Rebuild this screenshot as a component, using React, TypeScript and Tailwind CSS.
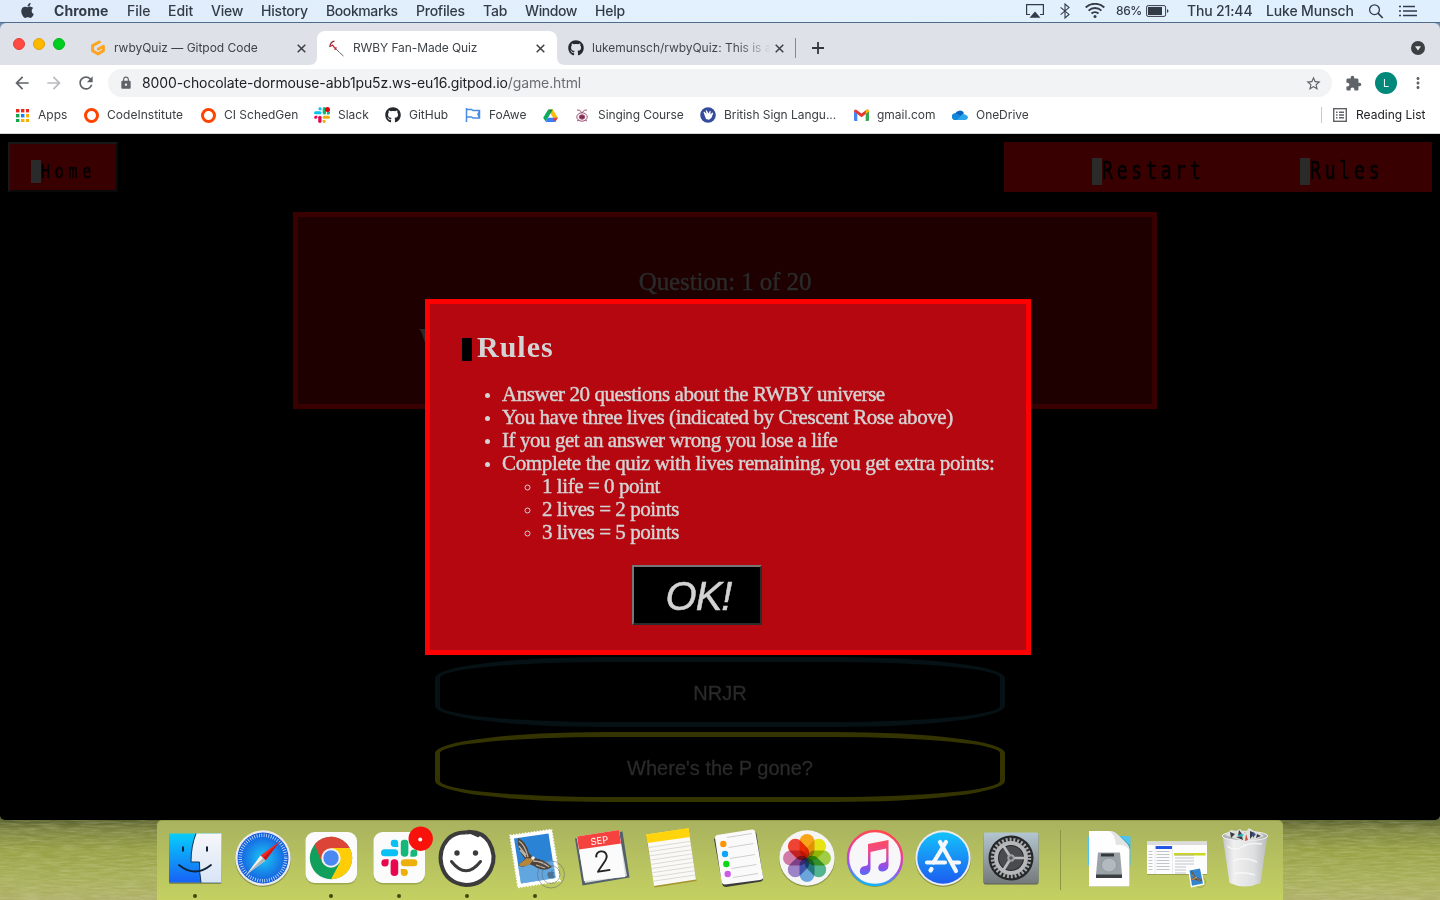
import type { ReactNode } from "react";
import { FaApple, FaGithub } from "react-icons/fa";
import { MdArrowBack, MdArrowForward, MdExtension, MdLock, MdMoreVert, MdRefresh, MdStarBorder } from "react-icons/md";

function Menu({ w, children }: { w: string; children: ReactNode }) {
  return <span className={`${w} shrink-0 pb-px`}>{children}</span>;
}

function MenuBar() {
  return (
    <div className="flex h-[23px] shrink-0 items-center border-b border-[#4e6c8c] bg-linear-to-r from-[#dfebfa] via-[#e3f1fe] to-[#e0effd] text-[14px] font-medium text-[#333b47]">
      <div className="flex w-[54px] shrink-0 pl-[19px]">
        <FaApple className="mb-[2px] h-[17px] w-[17px]" />
      </div>
      <Menu w="w-[73px] font-bold tracking-[0.05px]">Chrome</Menu>
      <Menu w="w-[41px]">File</Menu>
      <Menu w="w-[43px]">Edit</Menu>
      <Menu w="w-[50px] tracking-[-0.2px]">View</Menu>
      <Menu w="w-[65px] tracking-[-0.2px]">History</Menu>
      <Menu w="w-[90px] tracking-[-0.4px]">Bookmarks</Menu>
      <Menu w="w-[67px] tracking-[-0.25px]">Profiles</Menu>
      <Menu w="w-[42px] tracking-[-0.2px]">Tab</Menu>
      <Menu w="w-[70px] tracking-[-0.4px]">Window</Menu>
      <Menu w="w-[431px] tracking-[-0.2px]">Help</Menu>
      <svg className="mr-[16px] h-4 w-[18px] shrink-0" viewBox="0 0 18 16" fill="none" stroke="#333b47" strokeWidth="1.2">
        <path d="M4 11.5H.6V1.6h16.8v9.9H14" />
        <path d="M9 8.5l5.5 6.3h-11z" fill="#333b47" stroke="none" />
      </svg>
      <svg className="mr-[15px] h-4 w-[10px] shrink-0" viewBox="0 0 10 16" fill="none" stroke="#333b47" strokeWidth="1.1">
        <path d="M.6 4.400l8.400 7L5 15V1l4 3.600-8.400 7" />
      </svg>
      <svg className="mr-[11px] h-4 w-5 shrink-0" viewBox="0 0 20 16" fill="none" stroke="#333b47" strokeWidth="1.9">
        <path d="M.7 4.500a13.500 13.500 0 0 1 18.600 0M3.600 7.600a9.300 9.300 0 0 1 12.800 0M6.500 10.500a5.200 5.200 0 0 1 7 0" />
        <circle cx="10" cy="13.500" r="1.500" fill="#333b47" stroke="none" />
      </svg>
      <span className="w-[30px] shrink-0 pb-px text-[12px] tracking-[-0.4px]">86%</span>
      <svg className="mr-[18px] h-3 w-[23px] shrink-0" viewBox="0 0 23 12">
        <rect x=".6" y=".6" width="19" height="10.8" rx="1.5" fill="none" stroke="#333b47" />
        <rect x="2" y="2" width="14" height="8" fill="#333b47" />
        <path d="M21 4q3 2 0 4z" fill="#333b47" />
      </svg>
      <Menu w="w-[79px] tracking-[-0.15px]">Thu 21:44</Menu>
      <Menu w="w-[102px] tracking-[-0.15px]">Luke Munsch</Menu>
      <svg className="mr-[15px] h-[16px] w-[16px] shrink-0" viewBox="0 0 16 16" fill="none" stroke="#333b47" strokeWidth="1.3">
        <circle cx="6.5" cy="6.7" r="4.9" />
        <path d="M10 10.2l4.7 4.8" strokeWidth="1.7" />
      </svg>
      <svg className="h-3 w-[18px] shrink-0" viewBox="0 0 18 12" stroke="#333b47" strokeWidth="1.7">
        <path d="M0 1.500h2M0 6h2M0 10.500h2M4 1.500h12M4 6h14M4 10.500h14" />
      </svg>
    </div>
  );
}

function Close() {
  return (
    <svg className="h-[9px] w-[9px] shrink-0" viewBox="0 0 9 9" stroke="#3c4043" strokeWidth="1.5">
      <path d="M.7.7l7.6 7.6M8.3.7L.7 8.3" />
    </svg>
  );
}

function TabStrip() {
  return (
    <div className="flex h-[42px] shrink-0 rounded-t-[6px] bg-[#dee1e8] text-[12px] text-[#3f4347]">
      <div className="flex w-[77px] shrink-0 gap-2 pt-[15px] pl-[13px]">
        <i className="h-3 w-3 rounded-full border border-[#e33e38] bg-[#fe4a42]" />
        <i className="h-3 w-3 rounded-full border border-[#e2a100] bg-[#fdb900]" />
        <i className="h-3 w-3 rounded-full border border-[#00b51d] bg-[#00cf22]" />
      </div>
      <div className="mt-2 flex h-[34px] w-[240px] shrink-0 items-center pl-[13px]">
        <svg className="mr-2 h-4 w-4 shrink-0" viewBox="0 0 16 16" fill="none" stroke="#fda423" strokeWidth="3" strokeLinejoin="round" strokeLinecap="round">
          <path d="M9.3 2L2.6 5.6v5.2L8 14l5.4-3.2V6.3L8.4 9" />
        </svg>
        <span className="w-[183px] tracking-[-0.02px]">rwbyQuiz — Gitpod Code</span>
        <Close />
      </div>
      <div className="relative mt-2 flex h-[34px] w-[240px] shrink-0 items-center rounded-t-lg bg-white pl-[11px]">
        <svg className="absolute bottom-0 -left-2 h-2 w-2" viewBox="0 0 8 8"><path d="M8 0v8H0q8 0 8-8" fill="#fff" /></svg>
        <svg className="absolute -right-2 bottom-0 h-2 w-2" viewBox="0 0 8 8"><path d="M0 0v8h8Q0 8 0 0" fill="#fff" /></svg>
        <svg className="mr-2 h-[17px] w-[17px] shrink-0" viewBox="0 0 17 17" fill="none">
          <path d="M6.500 1.200Q2.500 1.500 1.800 7" stroke="#8f2a31" strokeWidth="1.300" />
          <path d="M2.200 6.500l2.300-1.500 3.500 4.500M6.500 9.500l2-2" stroke="#c92a36" strokeWidth="1.300" />
          <path d="M7.500 8.500l4 4 4 3.500" stroke="#77656b" strokeWidth="1" />
        </svg>
        <span className="w-[183px] tracking-[-0.1px]">RWBY Fan-Made Quiz</span>
        <Close />
      </div>
      <div className="mt-2 flex h-[34px] w-[240px] shrink-0 items-center pl-[11px]">
        <FaGithub className="mr-2 h-4 w-4 shrink-0 text-[#24292e]" />
        <span className="w-[183px] tracking-[-0.03px] whitespace-nowrap"><span className="bg-linear-to-r from-[#3f4347] from-80% to-[#dee1e8] to-100% bg-clip-text text-transparent">lukemunsch/rwbyQuiz: This is a</span></span>
        <Close />
        <i className="ml-[11px] h-5 w-px shrink-0 bg-[#85888d]" />
      </div>
      <svg className="mt-[19px] ml-[15px] h-3 w-3 shrink-0" viewBox="0 0 12 12" stroke="#35393d" strokeWidth="1.8"><path d="M6 0v12M0 6h12" /></svg>
      <svg className="mt-[18px] mr-[15px] ml-auto h-[14px] w-[14px] shrink-0" viewBox="0 0 14 14"><circle cx="7" cy="7" r="7" fill="#3c4043" /><path d="M4 5.2h6L7 9.6z" fill="#e8eaed" /></svg>
    </div>
  );
}

function Toolbar() {
  return (
    <div className="flex h-9 shrink-0 items-center bg-white text-[#5f6368]">
      <MdArrowBack className="ml-[12px] h-5 w-5 shrink-0" />
      <MdArrowForward className="ml-[12px] h-5 w-5 shrink-0 text-[#b9bbbe]" />
      <MdRefresh className="ml-[12px] h-5 w-5 shrink-0" />
      <div className="ml-[12px] flex h-7 w-[1224px] shrink-0 items-center rounded-full bg-[#f1f3f4] pr-[10px] pl-[11px]">
        <MdLock className="mr-[9px] h-[14px] w-[14px] shrink-0" />
        <span className="pb-[2px] text-[14px] tracking-[-0.11px] text-[#202124]">8000-chocolate-dormouse-abb1pu5z.ws-eu16.gitpod.io<span className="text-[#696d72]">/game.html</span></span>
        <MdStarBorder className="ml-auto h-[17px] w-[17px] shrink-0" />
      </div>
      <MdExtension className="ml-[13px] h-[17px] w-[17px] shrink-0" />
      <span className="ml-[13px] flex h-[22px] w-[22px] shrink-0 items-center justify-center rounded-full bg-[#00897b] text-[11px] text-[#e6f5f2]">L</span>
      <MdMoreVert className="ml-[12px] h-[18px] w-[18px] shrink-0" />
    </div>
  );
}

function SlackMark({ className }: { className: string }) {
  return (
    <svg className={className} viewBox="0 0 36 36">
      <g fill="#0bc0f2"><rect x="0" y="9.5" width="17" height="7" rx="3.5" /><path d="M17 7.5h-4A3.5 3.5 0 1 1 17 4z" /></g>
      <g fill="#14b87a"><rect x="19.5" y="0" width="7.5" height="17" rx="3.7" /><path d="M29 17v-4a3.6 3.6 0 1 1 3.5 4z" /></g>
      <g fill="#edb00b"><rect x="19.5" y="19.5" width="16.5" height="7" rx="3.5" /><path d="M19.5 29h4a3.500 3.500 0 1 1-4 3.500z" /></g>
      <g fill="#e8064f"><rect x="9.5" y="19.5" width="7.5" height="16.5" rx="3.7" /><path d="M7.5 19.5v4a3.600 3.600 0 1 1-3.500-4z" /></g>
    </svg>
  );
}

function Ring() {
  return <i className="h-[15px] w-[15px] rounded-full border-[3.5px] border-[#ff4400]" />;
}

function Bookmark({ w, icon, label }: { w: string; icon: ReactNode; label?: string }) {
  return (
    <div className={`${w} flex shrink-0 items-center whitespace-nowrap`}>
      <span className="mr-2 flex w-4 shrink-0 justify-center">{icon}</span>
      {label}
    </div>
  );
}

const appDots = ["#ea2a1f", "#ea2a1f", "#ea2a1f", "#15a44c", "#1a80f5", "#f9b000", "#15a44c", "#f9b000", "#f9b000"];

function Bookmarks() {
  return (
    <div className="flex h-[33px] shrink-0 items-center border-b border-[#d5d6d8] bg-white pb-[4px] pl-[14px] text-[12px] text-[#3c4043]">
      <Bookmark w="w-[69px]" label="Apps" icon={<svg className="h-[13px] w-[13px]" viewBox="0 0 13 13">{appDots.map((c, i) => <rect key={i} x={(i % 3) * 5} y={Math.floor(i / 3) * 5} width="3.400" height="3.400" fill={c} />)}</svg>} />
      <Bookmark w="w-[117px] tracking-[0.03px]" label="CodeInstitute" icon={<Ring />} />
      <Bookmark w="w-[114px]" label="CI SchedGen" icon={<Ring />} />
      <Bookmark w="w-[71px]" label="Slack" icon={<span className="relative"><SlackMark className="h-4 w-4" /><i className="absolute top-0 right-0 h-[5px] w-[5px] rounded-full bg-[#e8000d]" /></span>} />
      <Bookmark w="w-[80px]" label="GitHub" icon={<FaGithub className="h-4 w-4 text-[#24292e]" />} />
      <Bookmark w="w-[77px]" label="FoAwe" icon={<svg className="h-4 w-4" viewBox="0 0 16 16" fill="none" stroke="#4a8be0" strokeWidth="1.5"><path d="M1.500 1v14M1.500 2.500h5l1.500 1h6.500v7.500H8L6.500 10h-5M14.500 3.500l-1.500 3.700 1.500 3.800" /></svg>} />
      <Bookmark w="w-[32px]" icon={<svg className="h-[15px] w-[15px] shrink-0" viewBox="0 0 16 15"><path d="M5.5 1h5l5.3 9h-5z" fill="#fdbc05" /><path d="M5.5 1L8 5.3 2.8 14 .2 10z" fill="#0da960" /><path d="M5.2 10h10.6L13 14.3H2.8z" fill="#3a7cf3" /><path d="M5.5 1h5L8 5.3z" fill="#0b8c45" /><path d="M10.8 10h5L13 14.3z" fill="#ea4335" /></svg>} />
      <Bookmark w="w-[126px] tracking-[-0.07px]" label="Singing Course" icon={<svg className="h-4 w-4" viewBox="0 0 16 16" fill="none" stroke="#9b5577"><ellipse cx="8" cy="10" rx="5.2" ry="4.2" /><ellipse cx="8" cy="10" rx="2.8" ry="2.2" fill="#872953" /><path d="M8 6Q6 2 3 3M8 6q2-4 5-3M3 14l2-1M13 14l-2-1" /></svg>} />
      <Bookmark w="w-[153px] tracking-[-0.04px]" label="British Sign Langu..." icon={<svg className="h-4 w-4" viewBox="0 0 16 16"><circle cx="8" cy="8" r="7.8" fill="#354b9c" /><path d="M4.500 8l-1-3 1-.3L6.500 7l-.8-3.500 1-.2L8.500 6.500 9.800 4l.9.3-.3 3.200 2-2 .8.7-1.700 4.500-2.500 2.100-3-.8z" fill="#fff" /></svg>} />
      <Bookmark w="w-[99px]" label="gmail.com" icon={<svg className="h-3 w-[15px]" viewBox="0 0 15 12"><path d="M0 2l3.3 2.4V12H1a1 1 0 0 1-1-1z" fill="#4285f4" /><path d="M15 2l-3.3 2.4V12H14a1 1 0 0 0 1-1z" fill="#34a853" /><path d="M0 2.4Q.2 0 2.4.7l5.1 3.8L12.6.7Q14.8 0 15 2.4L7.5 8.2z" fill="#e5392f" /><path d="M12 1.2l.6-.5Q14.8 0 15 2.4L11.7 5z" fill="#fbbc04" /></svg>} />
      <Bookmark w="w-[369px] tracking-[-0.05px]" label="OneDrive" icon={<svg className="h-4 w-4" viewBox="0 0 16 16"><path d="M3 7a5 5 0 0 1 9-1l-4 5z" fill="#0864c1" /><path d="M4 13a3.5 3.5 0 1 1 1-6.4l9 6z" fill="#1286d8" /><path d="M5 13l5-5.5q2-1.2 3.5.3Q16 8.500 16 10.600 15.700 13 13 13z" fill="#28a8ea" /></svg>} />
      <i className="mr-[11px] h-4 w-px shrink-0 bg-[#c7c9cc]" />
      <svg className="mr-[9px] h-[14px] w-[14px] shrink-0" viewBox="0 0 14 14" fill="none" stroke="#5f6368" strokeWidth="1.4"><rect x=".7" y=".7" width="12.600" height="12.600" /><path d="M3 4.200h1.500M3 7h1.500M3 9.800h1.500M6 4.200h5M6 7h5M6 9.800h5" /></svg>
      <span className="whitespace-nowrap text-[#202124]">Reading List</span>
    </div>
  );
}

function Nav({ label }: { label: string }) {
  return (
    <span className="flex">
      <i className="h-[27px] w-[10px] bg-[#2a2a2a]" />
      <span className="w-0 origin-left scale-x-75 font-['DejaVu_Sans_Mono',monospace] text-[24px] leading-[27px] tracking-[5.1px] whitespace-nowrap text-black [-webkit-text-stroke:0.5px_black]">{label}</span>
    </span>
  );
}

function Rules() {
  return (
    <div className="absolute top-[165px] left-[425px] h-[356px] w-[606px] border-5 border-[#ff0000] bg-[#b5070f] font-['Liberation_Serif',serif] text-[#d3d3d3]">
      <div className="flex items-center pt-[26px] pl-[32px]">
        <i className="mt-[4px] h-[23px] w-[10px] bg-black" />
        <h2 className="ml-[5px] text-[30px] leading-[34px] font-bold tracking-[1px]">Rules</h2>
      </div>
      <ul className="mt-[19px] list-disc pl-[72px] text-[21px] leading-[23px] tracking-[-0.44px] whitespace-nowrap [-webkit-text-stroke:0.45px_#d3d3d3]">
        <li className="marker:text-[17px]">Answer 20 questions about the RWBY universe</li>
        <li className="marker:text-[17px]">You have three lives (indicated by Crescent Rose above)</li>
        <li className="marker:text-[17px]">If you get an answer wrong you lose a life</li>
        <li className="tracking-[-0.36px] marker:text-[17px]">
          Complete the quiz with lives remaining, you get extra points:
          <ul className="list-[circle] pl-10 tracking-[-0.44px]">
            <li className="marker:text-[17px]">1 life = 0 point</li>
            <li className="marker:text-[17px]">2 lives = 2 points</li>
            <li className="marker:text-[17px]">3 lives = 5 points</li>
          </ul>
        </li>
      </ul>
      <button className="mt-[21px] ml-[202px] flex h-[60px] w-[130px] items-center justify-center border-2 border-t-[#767676] border-r-[#2c2c2c] border-b-[#2c2c2c] border-l-[#767676] bg-black pt-[2px] pl-[3px] font-['Liberation_Sans',sans-serif] text-[40px] tracking-[-1px] italic [-webkit-text-stroke:0.5px_#d3d3d3]">OK!</button>
    </div>
  );
}

function QuizPage() {
  return (
    <main className="relative flex h-[686px] shrink-0 flex-col overflow-hidden rounded-b-[5px] bg-black">
      <header className="flex justify-between px-2 pt-2">
        <div className="flex h-[50px] w-[110px] border-2 border-t-[#181818] border-r-[#090909] border-b-[#090909] border-l-[#181818] bg-[#380000] pt-[16px] pl-[21px]">
          <i className="h-[23px] w-[10px] bg-[#2a2a2a]" />
          <span className="w-0 origin-left scale-x-75 font-['DejaVu_Sans_Mono',monospace] text-[20px] leading-[22px] tracking-[6.3px] text-black [-webkit-text-stroke:0.5px_black]">Home</span>
        </div>
        <div className="flex h-[50px] w-[428px] bg-[#380000] pt-[16px] pl-[88px]">
          <div className="w-[208px]"><Nav label="Restart" /></div>
          <Nav label="Rules" />
        </div>
      </header>
      <section className="mt-5 ml-[293px] h-[197px] w-[864px] shrink-0 border-5 border-[#380000] bg-[#1e0000] pt-[45px] font-['Liberation_Serif',serif] text-[#2a2a2a]">
        <p className="text-center text-[25px] leading-10 tracking-[-0.1px] [-webkit-text-stroke:0.4px_#2a2a2a]">Question: 1 of 20</p>
        <p className="mt-[20px] pl-[121px] text-[25px] leading-8 font-bold">W</p>
      </section>
      <div className="mt-[248px] ml-[435px] flex w-[570px] flex-col gap-[5px] font-['Liberation_Sans',sans-serif] text-[20px] text-[#2a2a2a] [-webkit-text-stroke:0.3px_#2a2a2a]">
        <button className="h-[70px] rounded-[30%] border-5 border-[#051114] pt-[2px]">NRJR</button>
        <button className="h-[70px] rounded-[30%] border-5 border-[#343400] pt-[2px]">Where's the P gone?</button>
      </div>
      <Rules />
    </main>
  );
}

function Slot({ running, children }: { running?: boolean; children: ReactNode }) {
  return (
    <svg className="h-20 w-[68px] shrink-0" viewBox="0 0 68 80">
      {children}
      {running && <circle cx="34" cy="75" r="2" fill="#414810" />}
    </svg>
  );
}

const petals = ["#f9a51a", "#e8e317", "#a0cd45", "#52b590", "#6aa6dc", "#9c83c8", "#d07aa8", "#ef4433"];

function Bird() {
  return (
    <g>
      <path d="M-12-19Q-4-16-1-4L4 1Q14 2 22 10 14 16 4 9L-1 7Q-7 12-12 8L-5 2Q-13-7-12-19" fill="#4f4339" />
      <path d="M-11-16Q-5-12-2 0M3 4Q12 4 19 10M-11-11l7 9M-10-7l6 7M6 8l9 3" stroke="#c0b5a9" strokeWidth="1.300" fill="none" />
      <path d="M-12 8L-3 1l7 1-4 5q-6 4-12 1" fill="#b3853f" />
      <circle cx="3" cy="1" r="1.800" fill="#f2eee8" />
    </g>
  );
}

function Dock() {
  return (
    <div className="flex h-20 w-[1126px] rounded-t-[5px] border-t border-[#98a04e] bg-linear-to-b from-[#a9b25e] to-[#c4d161] px-1">
      <Slot running>
        <defs>
          <linearGradient id="fa" x2="0" y2="1"><stop stopColor="#08cdfa" /><stop offset="1" stopColor="#1762f7" /></linearGradient>
          <linearGradient id="fb" x2="0" y2="1"><stop stopColor="#f7f7fa" /><stop offset="1" stopColor="#d8e5f5" /></linearGradient>
        </defs>
        <rect x="8" y="13" width="52.500" height="50" rx="1" fill="#000" opacity=".3" />
        <rect x="8" y="12.500" width="52.500" height="49" rx="1" fill="url(#fa)" />
        <path d="M35 12.500h25.500v49H40q-1.700-10-1.500-20.500H30Q30 25 35 12.500" fill="url(#fb)" />
        <path d="M35 12.500Q30 25 30 41h8.500Q38.300 52 40 61.500" fill="none" stroke="#12344f" strokeWidth="1" />
        <path d="M22 25.500v5M46 25.500v5" stroke="#102339" strokeWidth="2" />
        <path d="M18 44q16 13 32 0" stroke="#102339" strokeWidth="1.800" fill="none" strokeLinecap="round" />
      </Slot>
      <Slot>
        <defs><radialGradient id="sf"><stop stopColor="#1cc7f7" /><stop offset="1" stopColor="#1459dd" /></radialGradient></defs>
        <circle cx="34" cy="38" r="28" fill="#59602b" opacity=".5" />
        <circle cx="34" cy="37" r="27.700" fill="#ececee" />
        <circle cx="34" cy="37" r="25.500" fill="url(#sf)" />
        <circle cx="34" cy="37" r="22.800" fill="none" stroke="#dceefc" strokeWidth="3.500" strokeDasharray=".7 1.690" />
        <path d="M50.500 20.500L31.500 34.500l5 5z" fill="#f02b26" />
        <path d="M50.500 20.500L34 37l2.500 2.500z" fill="#c9141c" />
        <path d="M17.500 53.500l14-19 5 5z" fill="#f2f2f2" />
        <path d="M17.500 53.500L34 37l2.500 2.500z" fill="#aeb4b8" />
      </Slot>
      <Slot running>
        <rect x="8.500" y="12" width="51.500" height="51.500" rx="9" fill="#606b2c" opacity=".35" />
        <rect x="8.500" y="11" width="51.500" height="51" rx="9" fill="#fbfbfb" />
        <g transform="translate(0 -.5)">
          <circle cx="34" cy="37.500" r="21.200" fill="#11a05c" />
          <path d="M34 27.500h18.700A21.200 21.200 0 0 1 34 58.700L42.700 42.500z" fill="#ffcd05" />
          <path d="M17.500 24A21.200 21.200 0 0 1 52.700 27.500H34L25.300 42.500z" fill="#dc4437" />
          <circle cx="34" cy="37.500" r="9.700" fill="#f1f1f1" />
          <circle cx="34" cy="37.500" r="7.700" fill="#4a88f2" />
        </g>
      </Slot>
      <Slot running>
        <rect x="8.500" y="12" width="51.500" height="51.500" rx="9" fill="#606b2c" opacity=".35" />
        <rect x="8.500" y="11" width="51.500" height="51" rx="9" fill="#fbfbfb" />
        <svg x="16" y="18.500" width="36.500" height="36.500" viewBox="0 0 36 36">
          <g fill="#0bc0f2"><rect y="9.500" width="17" height="7" rx="3.500" /><path d="M17 7.500h-4A3.700 3.700 0 1 1 17 4z" /></g>
          <g fill="#14b87a"><rect x="19.500" width="7.500" height="17" rx="3.700" /><path d="M29 17v-4a3.600 3.600 0 1 1 3.500 4z" /></g>
          <g fill="#edb00b"><rect x="19.500" y="19.500" width="16.500" height="7" rx="3.500" /><path d="M19.500 29h4a3.500 3.500 0 1 1-4 3.500z" /></g>
          <g fill="#e8064f"><rect x="9.500" y="19.500" width="7.500" height="16.500" rx="3.700" /><path d="M7.500 19.500v4a3.600 3.600 0 1 1-3.500-4z" /></g>
        </svg>
        <circle cx="55.700" cy="17.700" r="12.200" fill="#f9110b" />
        <circle cx="55.200" cy="18.500" r="2" fill="#fff" />
      </Slot>
      <Slot running>
        <path d="M33 11.500Q48 9 56 21q8 14 2 27Q50 64 33 64 13 62 8.500 44 5 29 15 18q7-7 18-6.500" fill="#fff" stroke="#3b3b3b" strokeWidth="4" />
        <path d="M36 10.500l9 4" stroke="#3b3b3b" strokeWidth="3.500" strokeLinecap="round" />
        <circle cx="24" cy="32" r="2.700" fill="#3b3b3b" /><circle cx="42.500" cy="32" r="2.700" fill="#3b3b3b" />
        <path d="M18.500 40.500Q33 59 47.500 40.500" fill="none" stroke="#3b3b3b" strokeWidth="3" strokeLinecap="round" />
      </Slot>
      <Slot running>
        <path d="M9 14.500L50.500 8.500 59 60 17 66.500z" fill="#fff" stroke="#fff" strokeWidth="1.600" strokeDasharray="1.500 1.500" />
        <path d="M13 17.500L47.500 12.500 54.500 57 20 62.500z" fill="#2b83d6" />
        <path d="M17 45L52.500 39l2.500 18L20 62.500z" fill="#80b8e5" opacity=".65" />
        <g transform="translate(29 36)"><Bird /></g>
        <g fill="none" stroke="#59606a" strokeWidth="1" opacity=".5"><circle cx="50" cy="53.500" r="13.500" /><circle cx="50" cy="53.500" r="9" /></g>
        <FaApple x="45" y="48" size={10} color="#42566b" opacity=".65" />
      </Slot>
      <Slot>
        <path d="M6 17.500l47.500-7L60.500 56.500l-47 8z" fill="#53606b" />
        <path d="M7.500 16L50 10l8 45-42 7z" fill="#d7d9da" />
        <path d="M8 15.500l42-6.500 6.300 47-41.300 4z" fill="#fbfbfb" />
        <path d="M8 15.500l42-6.500 2 13.500L10 28.500z" fill="#f5423e" />
        <text x="30.500" y="23" transform="rotate(-8 30 20)" textAnchor="middle" fontSize="9.500" fill="#fff">SEP</text>
        <text x="33.500" y="51" transform="rotate(-8 33 42)" textAnchor="middle" fontSize="29" fontWeight="300" fill="#222">2</text>
      </Slot>
      <Slot>
        <path d="M9 14.500L51.500 9l8 51L17.500 66.500z" fill="#a7932e" />
        <path d="M9.500 13.500L51.500 7.500 59 58.500 17 65z" fill="#faf9f5" />
        <path d="M9 13.500L51.500 7 53 16 10.500 22z" fill="#ffd40c" />
        {Array.from({ length: 9 }, (_, i) => <path key={i} d={`M${11.500 + i * 0.65} ${26.500 + i * 4.200}l42-6.200`} stroke="#cdcdc9" strokeWidth=".7" />)}
      </Slot>
      <Slot>
        <path d="M12 16l36-6q3 0 3.500 3l6.500 44q.500 3-3 3.700L21 66q-3 0-3.800-3L9 18z" fill="#3c3c3a" />
        <path d="M12 14l35-5.500q3 0 3.500 3l7.500 44q.500 3-3 3.500L20 63.500q-3 0-3.500-3L10 17q0-2.500 2-3" fill="#fafafa" />
        <path d="M22 16.500l25-4M23.500 26.500l25-4M25 37.500l25-4M26.500 47.500l25-4M28 56.500l25-4" stroke="#c3c3c3" strokeWidth=".8" />
        <circle cx="18.300" cy="23" r="3.200" fill="#ff9508" /><circle cx="20" cy="33" r="3.200" fill="#13a5fa" /><circle cx="21.300" cy="43" r="3.200" fill="#09d817" /><circle cx="22.700" cy="53" r="3.200" fill="#cc5ce5" />
      </Slot>
      <Slot>
        <circle cx="34" cy="38" r="28" fill="#59602b" opacity=".5" />
        <circle cx="34" cy="37" r="27.700" fill="#f5f5f5" />
        <g className="isolate">
          {petals.map((c, i) => <rect key={c} className="mix-blend-multiply" x="26.500" y="13" width="15" height="24" rx="7.500" fill={c} transform={`rotate(${i * 45} 34 37)`} />)}
        </g>
      </Slot>
      <Slot>
        <defs><linearGradient id="mu" x1=".6" x2=".4" y2="1"><stop stopColor="#ff4a4a" /><stop offset=".35" stopColor="#f0408f" /><stop offset=".65" stopColor="#a94ff0" /><stop offset="1" stopColor="#12b5f8" /></linearGradient>
          <linearGradient id="mv" gradientUnits="userSpaceOnUse" x1="34" x2="34" y1="19" y2="55"><stop stopColor="#fb4c5f" /><stop offset=".35" stopColor="#ed4a8b" /><stop offset=".7" stopColor="#9b4be5" /><stop offset="1" stopColor="#4b6df5" /></linearGradient></defs>
        <circle cx="34" cy="38" r="28" fill="#59602b" opacity=".5" />
        <circle cx="34" cy="37" r="27" fill="#f7f7fa" stroke="url(#mu)" strokeWidth="2.400" />
        <path d="M27 23l20.500-4v25.500q0 5-5.500 6-4.800.300-4.800-4 .5-4 5-4.700 3-.300 3-2.300V27.500L29.500 31v17q-.5 5-6 6-4.700.300-4.700-4 .5-4.500 5.200-5 3-.300 3-2.500z" fill="url(#mv)" />
      </Slot>
      <Slot>
        <defs><linearGradient id="as" x2="0" y2="1"><stop stopColor="#14c2fb" /><stop offset="1" stopColor="#1c5cf0" /></linearGradient></defs>
        <circle cx="34" cy="38" r="28" fill="#59602b" opacity=".5" />
        <circle cx="34" cy="37" r="27.700" fill="#ededf0" />
        <circle cx="34" cy="37" r="25.700" fill="url(#as)" />
        <g stroke="#f4f8fc" strokeWidth="4.200" strokeLinecap="round"><path d="M37 21L24.500 41.500M22.500 48l-1 1.500M31 21l16 29" /><path d="M18 41.500h18M43 41.500h7" /></g>
      </Slot>
      <Slot>
        <defs><linearGradient id="sy" x2="0" y2="1"><stop stopColor="#b4c6d1" /><stop offset="1" stopColor="#74797b" /></linearGradient></defs>
        <rect x="6.500" y="12" width="55" height="51.500" rx="2" fill="#596153" />
        <rect x="6.500" y="11.500" width="55" height="51" rx="2" fill="url(#sy)" />
        <circle cx="34" cy="37" r="22.500" fill="#252729" />
        <circle cx="34" cy="37" r="18.500" fill="none" stroke="#a7a9aa" strokeWidth="3.500" strokeDasharray="2 1.870" />
        <circle cx="34" cy="37" r="15" fill="none" stroke="#b5b7b8" strokeWidth="4" />
        <circle cx="34" cy="37" r="12" fill="#494c4e" />
        <path d="M34 37h14M34 37l-7.500-12M34 37l-7.500 12" stroke="#b9bbbc" strokeWidth="2.600" />
        <circle cx="34" cy="37" r="3.700" fill="#a0a3a5" /><circle cx="34" cy="37" r="1.800" fill="#555" />
      </Slot>
      <div className="flex w-[30px] shrink-0 justify-center pt-[9px]"><i className="h-[60px] w-px bg-[#8c9645]" /></div>
      <Slot>
        <rect x="13" y="15" width="42.500" height="30" rx="1.500" fill="#4dc3ee" />
        <path d="M14 10.500h22q9 3 18.800 14V66H14z" fill="#59602b" opacity=".35" />
        <path d="M14 10h20q5 0 9 4l8 8q3.500 3 3.500 8v35.500H14z" fill="#fefefe" />
        <path d="M34 10q6 3 7 14 9-1 13.300 5 0-4-3.300-7l-8-8q-4-4-9-4" fill="#e2e4e4" />
        <path d="M23 31.500h22l2 22v3.500H21v-3.500z" fill="#9ba3a8" /><path d="M21 53.500h26V57H21z" fill="#3c3f41" />
        <rect x="26" y="32.500" width="13" height="3" fill="#34383b" /><ellipse cx="34" cy="44" rx="7.500" ry="7" fill="#b2babe" stroke="#838b90" strokeWidth=".6" />
      </Slot>
      <Slot>
        <rect x="4" y="21" width="60" height="33" fill="#758041" opacity=".5" />
        <rect x="4" y="20.500" width="60" height="32.500" fill="#fcfcfc" />
        <rect x="4" y="20.500" width="60" height="3.500" fill="#dcdcdd" />
        <rect x="12.500" y="25" width="16.500" height="3" fill="#2356e4" /><rect x="31" y="32" width="31.500" height="2.500" fill="#cdd820" />
        <path d="M29.500 24v29M12 24v29" stroke="#ddd" strokeWidth=".5" />
        {[30.500, 33.500, 36.500, 39.500, 42.500, 45.500, 48.500].map((y) => <path key={y} d={`M5.500 ${y}h4M13.500 ${y}h13M32 ${y + 3.500}h${y > 40 ? 11 : 19}`} stroke="#a6adb8" strokeWidth=".7" />)}
        <circle cx="57" cy="61" r="5.500" fill="none" stroke="#6b7240" strokeWidth=".6" opacity=".6" />
        <path d="M45 48.500l13-2.500 3.500 17.500-13.500 3z" fill="#fff" /><path d="M46.500 49.500l10.500-2 3 15-11 2.300z" fill="#3385ce" />
        <g transform="translate(52 56) scale(.33)"><Bird /></g>
      </Slot>
      <Slot>
        <defs><linearGradient id="tr"><stop stopColor="#c4c6c7" /><stop offset=".25" stopColor="#f0f0f1" /><stop offset=".7" stopColor="#dedfe0" /><stop offset="1" stopColor="#b8babb" /></linearGradient></defs>
        <path d="M11.500 14l7 48q15 7 31 0l7-48z" fill="url(#tr)" />
        <path d="M16 25q8 6 15 1t20-3M22 40q11-5 24 1M23 53q8-3 21 1" stroke="#fafafa" strokeWidth="1.500" fill="none" opacity=".8" />
        <ellipse cx="34" cy="15" rx="22.700" ry="4.700" fill="#b1b3b4" stroke="#f1f1f1" strokeWidth="1" />
        <path d="M14 14l6-5 5 1 4-2 5 4 4-5 5 3 6 2 4 3-10 4-12 1z" fill="#dfe1e1" />
        <path d="M19 11l5 2-4 4zM28 9l3 4-4 2zM39 10l5 2-5 6zM46 13l4 2-5 2zM25 16l6-1 1 4z" fill="#393b3e" />
        <path d="M26 14l7-1-2 3z" fill="#20b5c0" /><path d="M35 13l2 6-3 1z" fill="#cf5336" /><path d="M41 12l4 1-3 4z" fill="#354d9a" />
      </Slot>
    </div>
  );
}

export default function App() {
  return (
    <div className="relative flex h-[900px] w-[1440px] flex-col overflow-hidden bg-[#6f8fb2] font-['Inter',sans-serif] whitespace-nowrap">
      <MenuBar />
      <TabStrip />
      <Toolbar />
      <Bookmarks />
      <div className="relative flex grow flex-col">
        <svg className="absolute bottom-0 left-0 h-[90px] w-[1440px]" viewBox="0 0 1440 90">
          <defs>
            <linearGradient id="gr" x2="0" y2="1"><stop offset=".1" stopColor="#555d2c" /><stop offset=".22" stopColor="#7d8440" /><stop offset=".45" stopColor="#98a146" /><stop offset=".75" stopColor="#a6ae57" /><stop offset="1" stopColor="#afb169" /></linearGradient>
            <filter id="nz"><feTurbulence type="fractalNoise" baseFrequency=".05 .5" numOctaves="4" seed="4" /><feColorMatrix values="0 0 0 0 .85  0 0 0 0 .87  0 0 0 0 .6  1.500 0 0 0 -.5" /></filter>
          </defs>
          <rect width="1440" height="90" fill="url(#gr)" />
          <rect width="1440" height="90" filter="url(#nz)" opacity=".3" />
        </svg>
        <QuizPage />
        <div className="relative flex justify-center"><Dock /></div>
      </div>
    </div>
  );
}
